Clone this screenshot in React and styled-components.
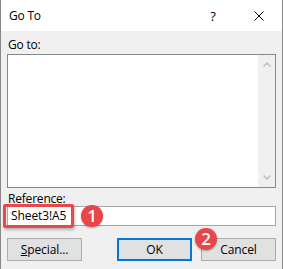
import React from "react";
import styled, { createGlobalStyle } from "styled-components";

const Global = createGlobalStyle`
  html, body { margin: 0; padding: 0; background: #ffffff; }
  body { font-family: "Open Sans", "Noto Sans", "Liberation Sans", sans-serif; font-size: 12px; color: #000; }
  * { box-sizing: border-box; }
`;

const Window = styled.div`
  width: 283px;
  height: 269px;
  display: flex;
  flex-direction: column;
  background: #f0f0f0;
  border-left: 1px solid #888888;
  border-right: 1px solid #888888;
`;

const TitleBar = styled.div`
  height: 31px;
  flex: none;
  display: flex;
  align-items: center;
  background: #ffffff;
`;

const Title = styled.div`
  flex: 1;
  padding-left: 8px;
  font-size: 12px;
  line-height: 16px;
  letter-spacing: -0.2px;
`;

const CaptionButton = styled.div`
  width: 46px;
  height: 31px;
  display: flex;
  align-items: center;
  justify-content: center;
  font-size: 13px;
  color: #000;
`;

const Body = styled.div`
  flex: 1;
  display: flex;
  flex-direction: column;
  padding: 6px 6px 8px 6px;
`;

const Label = styled.div`
  font-size: 12px;
  line-height: ${(p) => p.$lh || 16}px;
  margin-bottom: ${(p) => p.$mb || 0}px;
  margin-top: ${(p) => p.$mt || 0}px;
  padding-left: 1px;
  letter-spacing: -0.2px;
`;

const ListBox = styled.div`
  height: 134px;
  border: 1px solid #828790;
  background: #ffffff;
  display: flex;
  justify-content: flex-end;
`;

const ScrollBar = styled.div`
  width: 17px;
  background: #f0f0f0;
  display: flex;
  flex-direction: column;
  justify-content: space-between;
  align-items: center;
  padding: 7px 0 7px 0;
`;

const InputWrap = styled.div`
  position: relative;
  height: 20px;
`;

const Input = styled.div`
  height: 20px;
  border: 1px solid #a6a6a6;
  background: #ffffff;
  padding-left: 3px;
  font-size: 12px;
  line-height: 18px;
  letter-spacing: -0.1px;
`;

const Highlight = styled.div`
  position: absolute;
  left: -4px;
  top: -2px;
  width: 71px;
  height: 24px;
  border: 3px solid #e9474c;
  border-radius: 2px;
  box-shadow: 1px 2px 3px rgba(0, 0, 0, 0.25);
`;

const Badge = styled.div`
  position: absolute;
  left: ${(p) => p.$x}px;
  top: ${(p) => p.$y}px;
  width: 22px;
  height: 22px;
  border-radius: 50%;
  background: #ea4548;
  color: #ffffff;
  font-family: "Open Sans", "Noto Sans", sans-serif;
  font-size: 17px;
  font-weight: 600;
  line-height: 22px;
  text-align: center;
  box-shadow: 0 1px 2px rgba(0, 0, 0, 0.3);
  z-index: 2;
`;

const ButtonRow = styled.div`
  margin-top: 12px;
  display: flex;
  justify-content: space-between;
`;

const ButtonGroup = styled.div`
  position: relative;
  display: flex;
  gap: 9px;
`;

const Button = styled.div`
  width: 75px;
  height: 23px;
  background: #e1e1e1;
  border: ${(p) => (p.$default ? "2px solid #0078d7" : "1px solid #adadad")};
  display: flex;
  align-items: center;
  justify-content: center;
  font-size: 12px;
  letter-spacing: -0.1px;
`;

const Chevron = ({ up }) => (
  <svg width="8" height="5" viewBox="0 0 8 5">
    <path
      d={up ? "M0.5 4.5 L4 1 L7.5 4.5" : "M0.5 0.5 L4 4 L7.5 0.5"}
      fill="none"
      stroke="#bfbfbf"
      strokeWidth="1.5"
    />
  </svg>
);

const CloseIcon = () => (
  <svg width="10" height="10" viewBox="0 0 10 10">
    <path d="M0.5 0.5 L9.5 9.5 M9.5 0.5 L0.5 9.5" stroke="#000" strokeWidth="1" fill="none" />
  </svg>
);

export default function App() {
  return (
    <>
      <Global />
      <Window>
        <TitleBar>
          <Title>Go To</Title>
          <CaptionButton>?</CaptionButton>
          <CaptionButton>
            <CloseIcon />
          </CaptionButton>
        </TitleBar>
        <Body>
          <Label $mb={1}>Go to:</Label>
          <ListBox>
            <ScrollBar>
              <Chevron up />
              <Chevron />
            </ScrollBar>
          </ListBox>
          <Label $mt={3} $lh={15}>
            <u>R</u>eference:
          </Label>
          <InputWrap>
            <Input>Sheet3!A5</Input>
            <Highlight />
            <Badge $x={74} $y={-1}>1</Badge>
          </InputWrap>
          <ButtonRow>
            <Button>
              <span>
                <u>S</u>pecial...
              </span>
            </Button>
            <ButtonGroup>
              <Button $default>OK</Button>
              <Button>Cancel</Button>
              <Badge $x={78} $y={-10}>2</Badge>
            </ButtonGroup>
          </ButtonRow>
        </Body>
      </Window>
    </>
  );
}
